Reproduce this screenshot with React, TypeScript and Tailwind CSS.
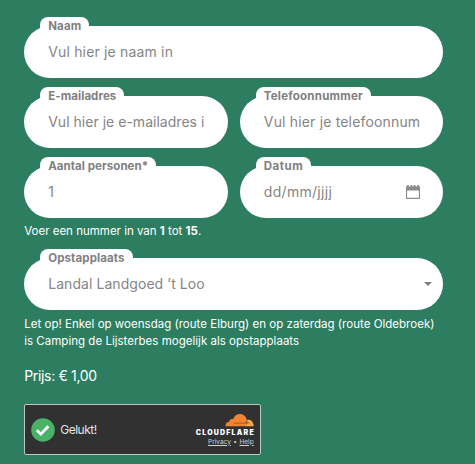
import type { ReactNode } from "react";

type FieldProps = {
  label: string;
  labelClass?: string;
  children: ReactNode;
};

function Field({ label, labelClass = "", children }: FieldProps) {
  return (
    <div className="relative flex h-[52px] min-w-0 items-center rounded-full bg-white px-6 pb-[2px] text-[14px] text-[#858585]">
      <label
        className={`absolute -top-[9px] left-4 h-[18px] rounded-t-[8px] bg-white px-2 text-[11.5px] leading-[18px] font-bold whitespace-nowrap text-[#808080] ${labelClass}`}
      >
        {label}
      </label>
      {children}
    </div>
  );
}

function CalendarIcon() {
  return (
    <svg width="14" height="14" viewBox="0 0 14 14" className="mt-px -mr-px ml-auto shrink-0" fill="#8c8c8c">
      <path d="M0 1.5h1V0h1.8v1.5h1.8V0h1.8v1.5h1.4V0h1.8v1.5h1.6V0H13v1.5h1V14H0V1.5Zm1.1 4v7.3h11.8V5.5H1.1Z" />
    </svg>
  );
}

function CloudIcon() {
  return (
    <svg width="29" height="14" viewBox="0 0 30 14" className="block">
      <path fill="#f6ad48" d="M21.5 13.5 23 7c3.5-.9 6.4 1.7 6.7 6.5h-8.2Z" />
      <path
        fill="#f38333"
        d="M.6 13.5C.4 10.7 1.9 9 4.3 8.8c.2-2.5 2.4-3.6 4.2-2.5C9.6 2.6 12.2.7 15.4.7c3.8 0 6.4 2.5 7.2 6.1l-.8 6.7H.6Z"
      />
      <path d="M9 10.2h12.2M22.6 7.6v3.5M20.8 9.9h4.8" stroke="#80502c" strokeWidth=".8" fill="none" />
    </svg>
  );
}

function Turnstile() {
  return (
    <div className="mt-[18px] flex h-[51px] w-[236.5px] items-center rounded-[2px] border border-[#bcc9c3] bg-[#313131] pr-1.5 pl-1.5">
      <svg width="24" height="24" viewBox="0 0 24 24">
        <circle cx="12" cy="12" r="11.8" fill="#49b267" />
        <path d="m5.8 12.3 4 3.8 7.6-7.9" fill="none" stroke="#fff" strokeWidth="2.8" />
      </svg>
      <span className="ml-[5px] text-[12px] tracking-[-0.5px] text-[#e4e4e4]">Gelukt!</span>
      <div className="ml-auto flex flex-col items-end">
        <CloudIcon />
        <span className="mt-[2px] -mr-[1.2px] text-[7px] leading-[7px] font-black tracking-[1.2px] text-white">
          CLOUDFLARE
        </span>
        <span className="mt-[2px] flex gap-[2.5px] text-[6.5px] leading-[9px] text-[#d2d2d2]">
          <span className="underline">Privacy</span>
          <span>•</span>
          <span className="underline">Help</span>
        </span>
      </div>
    </div>
  );
}

export default function App() {
  return (
    <main className="h-[464px] w-[475px] overflow-hidden bg-[#2d7e60] pt-[26px] pr-[31.6px] pl-[24.2px] font-['Inter',sans-serif]">
      <Field label="Naam" labelClass="tracking-[0.15px]">
        <span className="tracking-[0.17px] whitespace-nowrap">Vul hier je naam in</span>
      </Field>

      <div className="mt-[18px] grid grid-cols-2 gap-x-3 gap-y-[18px]">
        <Field label="E-mailadres" labelClass="tracking-[0.07px]">
          <span className="tracking-[0.02px] whitespace-nowrap">Vul hier je e-mailadres i</span>
        </Field>
        <Field label="Telefoonnummer" labelClass="tracking-[0.22px]">
          <span className="tracking-[0.17px] whitespace-nowrap">Vul hier je telefoonnum</span>
        </Field>
        <Field label="Aantal personen*" labelClass="tracking-[0.06px]">
          <span>1</span>
        </Field>
        <Field label="Datum" labelClass="tracking-[0.5px]">
          <span className="tracking-[0.3px]">dd/mm/jjjj</span>
          <CalendarIcon />
        </Field>
      </div>

      <p className="mt-[5px] h-[17px] text-[11.5px] leading-[17px] text-white">
        Voer een nummer in van <b>1</b> tot <b>15</b>.
      </p>

      <div className="mt-[18px]">
        <Field label="Opstapplaats" labelClass="tracking-[0.12px]">
          <span className="tracking-[0.06px] whitespace-nowrap">Landal Landgoed ’t Loo</span>
          <svg width="8" height="4" viewBox="0 0 8 4" className="-mr-[12.5px] mt-px ml-auto" fill="#808080">
            <path d="M0 0h8L4 4Z" />
          </svg>
        </Field>
      </div>

      <p className="mt-[6px] text-[11.5px] leading-[16.5px] tracking-[0.02px] whitespace-nowrap text-white">
        Let op! Enkel op woensdag (route Elburg) en op zaterdag (route Oldebroek)
        <br />
        is Camping de Lijsterbes mogelijk als opstapplaats
      </p>

      <p className="mt-[17px] text-[14px] leading-[20px] tracking-[-0.33px] text-white">Prijs: € 1,00</p>

      <Turnstile />
    </main>
  );
}
